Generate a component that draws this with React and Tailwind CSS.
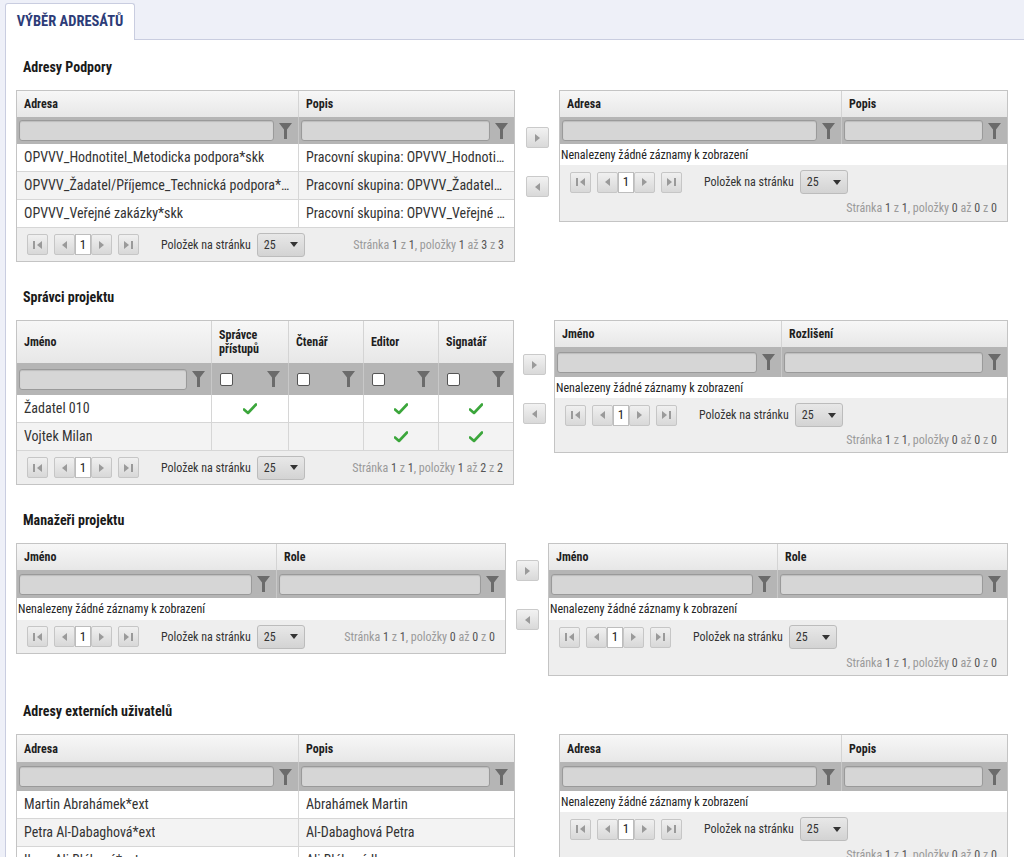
import React from "react";

const FONT = "font-['Liberation_Sans_Narrow','Roboto_Condensed',Roboto,sans-serif]";

function Funnel() {
  return (
    <svg width="13" height="16" viewBox="0 0 13 16" className="shrink-0">
      <path d="M0 0 H13 L8 6.5 V16 H5 V6.5 Z" fill="#6b6b6b" />
    </svg>
  );
}

function Check() {
  return (
    <svg width="14" height="12" viewBox="0 0 14 12">
      <path d="M1 6.5 L5 10 L13 1.5" fill="none" stroke="#3ba63b" strokeWidth="2.6" strokeLinecap="round" strokeLinejoin="round" />
    </svg>
  );
}

function Tri({ dir = "r" }) {
  return (
    <svg width="5" height="8" viewBox="0 0 5 8">
      {dir === "r" ? <path d="M0 0 L5 4 L0 8 Z" fill="#9a9a9a" /> : <path d="M5 0 L0 4 L5 8 Z" fill="#9a9a9a" />}
    </svg>
  );
}

function PgBtn({ children }) {
  return (
    <div className="w-[21px] h-[21px] flex items-center justify-center rounded-[2px] border border-[#c6c6c6] bg-gradient-to-b from-[#f0f0f0] to-[#d8d8d8]">
      {children}
    </div>
  );
}

function Pager({ total, from, to, twoLine, h = "h-[33px]", bottomH = "h-[18px]" }) {
  const left = (
    <div className="flex items-center">
      <PgBtn>
        <div className="flex items-center gap-[2px]">
          <div className="w-[1.5px] h-[8px] bg-[#9a9a9a]" />
          <Tri dir="l" />
        </div>
      </PgBtn>
      <div className="ml-[6px]">
        <PgBtn>
          <Tri dir="l" />
        </PgBtn>
      </div>
      <div className="w-[16px] h-[21px] bg-white border border-[#bdbdbd] flex items-center justify-center text-[13px] text-[#222]">
        1
      </div>
      <div>
        <PgBtn>
          <Tri dir="r" />
        </PgBtn>
      </div>
      <div className="ml-[6px]">
        <PgBtn>
          <div className="flex items-center gap-[2px]">
            <Tri dir="r" />
            <div className="w-[1.5px] h-[8px] bg-[#9a9a9a]" />
          </div>
        </PgBtn>
      </div>
      <span className="ml-[22px] text-[12px] text-[#333]">Položek na stránku</span>
      <div className="ml-[6px] w-[48px] h-[24px] rounded-[3px] border border-[#bcbcbc] bg-gradient-to-b from-[#e8e8e8] to-[#d3d3d3] flex items-center justify-between px-[6px] text-[12px] text-[#333]">
        <span>25</span>
        <svg width="8" height="5" viewBox="0 0 8 5">
          <path d="M0 0 H8 L4 5 Z" fill="#333" />
        </svg>
      </div>
    </div>
  );
  const info = (
    <span className="text-[12px] text-[#9a9a9a]">
      Stránka <span className="text-[#555]">1</span> z <span className="text-[#555]">1</span>, položky{" "}
      <span className="text-[#555]">{from}</span> až <span className="text-[#555]">{to}</span> z{" "}
      <span className="text-[#555]">{total}</span>
    </span>
  );
  if (twoLine) {
    return (
      <div className="bg-[#eeeeee] px-[10px] pb-[4px]">
        <div className="h-[34px] flex items-center">{left}</div>
        <div className={`${bottomH} flex items-center justify-end`}>{info}</div>
      </div>
    );
  }
  return (
    <div className={`bg-[#eeeeee] ${h} px-[10px] flex items-center justify-between`}>
      {left}
      {info}
    </div>
  );
}

function Table({ width, cols, rows, headerH, filterH, emptyH = "h-[21px]", twoLine, bottomH, from, to, total }) {
  return (
    <div className={`${width} shrink-0 border border-[#c4c4c4] flex flex-col`}>
      <div className={`flex ${headerH} bg-gradient-to-b from-[#f7f7f7] to-[#e7e7e7]`}>
        {cols.map((c, i) => (
          <div
            key={i}
            className={`${c.w} ${i < cols.length - 1 ? "border-r border-[#d4d4d4]" : ""} flex items-center px-[7px] text-[12px] font-bold text-[#1e1e1e] leading-[14px]`}
          >
            {c.label}
          </div>
        ))}
      </div>
      <div className={`flex ${filterH} bg-[#b5b5b5]`}>
        {cols.map((c, i) => (
          <div
            key={i}
            className={`${c.w} ${i < cols.length - 1 ? "border-r border-[#c8c8c8]" : ""} flex items-center ${c.check ? "pl-[8px] pr-[8px] justify-between" : "pl-[2px] pr-[6px] gap-[5px]"}`}
          >
            {c.check ? (
              <div className="w-[13px] h-[13px] bg-white border border-[#555] rounded-[2px]" />
            ) : (
              <div className="flex-1 h-[21px] rounded-[3px] border border-[#9a9a9a] bg-[#d6d6d6] shadow-[inset_0_1px_1px_rgba(0,0,0,0.12)]" />
            )}
            <Funnel />
          </div>
        ))}
      </div>
      {rows.length === 0 ? (
        <div className={`${emptyH} bg-white flex items-center px-[1px] text-[12px] text-[#222]`}>
          Nenalezeny žádné záznamy k zobrazení
        </div>
      ) : (
        rows.map((r, ri) => (
          <div key={ri} className={`flex h-[28px] border-b border-[#d6d6d6] ${ri % 2 === 1 ? "bg-[#f3f3f3]" : "bg-white"}`}>
            {cols.map((c, i) => (
              <div
                key={i}
                className={`${c.w} min-w-0 ${i < cols.length - 1 ? "border-r border-[#d6d6d6]" : ""} flex items-center ${r[i] === true ? "justify-center" : "px-[7px]"} text-[14px] text-[#333]`}
              >
                {r[i] === true ? <Check /> : <span className="truncate">{r[i]}</span>}
              </div>
            ))}
          </div>
        ))
      )}
      <Pager twoLine={twoLine} bottomH={bottomH} from={from} to={to} total={total} />
    </div>
  );
}

function Arrows({ pad }) {
  return (
    <div className={`flex flex-col gap-[28px] ${pad}`}>
      <div className="w-[23px] h-[21px] rounded-[2px] border border-[#cacaca] bg-gradient-to-b from-[#f2f2f2] to-[#d9d9d9] flex items-center justify-center">
        <Tri dir="r" />
      </div>
      <div className="w-[23px] h-[21px] rounded-[2px] border border-[#cacaca] bg-gradient-to-b from-[#f2f2f2] to-[#d9d9d9] flex items-center justify-center">
        <Tri dir="l" />
      </div>
    </div>
  );
}

function Section({ title, first, children }) {
  return (
    <div className={first ? "pt-[15px]" : "pt-[23px]"}>
      <div className="h-[24px] flex items-center pl-[17px] text-[14px] font-bold text-[#1a1a1a]">{title}</div>
      <div className="mt-[11px] flex items-start pl-[10px]">{children}</div>
    </div>
  );
}

export default function App() {
  const addrCols = [
    { label: "Adresa", w: "w-[282px]" },
    { label: "Popis", w: "flex-1" },
  ];
  const spravciCols = [
    { label: "Jméno", w: "w-[195px]" },
    { label: (<span>Správce<br />přístupů</span>), w: "w-[77px]", check: true },
    { label: "Čtenář", w: "w-[75px]", check: true },
    { label: "Editor", w: "w-[75px]", check: true },
    { label: "Signatář", w: "flex-1", check: true },
  ];
  return (
    <div className={`${FONT} bg-[#eef0f8] min-h-screen w-[1024px] overflow-hidden pl-[5px]`}>
      <div className="h-[39px] flex items-end">
        <div className="h-[37px] w-[130px] bg-white border border-b-0 border-[#c9cde0] rounded-t-[3px] flex items-center justify-center text-[14.5px] font-bold text-[#2d3c78] relative top-[1px]">
          VÝBĚR ADRESÁTŮ
        </div>
      </div>
      <div className="bg-white border-t border-l border-[#c9cde0] pb-[40px]">
        <Section title="Adresy Podpory" first>
          <Table
            width="w-[499px]"
            cols={addrCols}
            headerH="h-[26px]"
            filterH="h-[27px]"
            rows={[
              ["OPVVV_Hodnotitel_Metodicka podpora*skk", "Pracovní skupina: OPVVV_Hodnotitel_Metodicka podpora"],
              ["OPVVV_Žadatel/Příjemce_Technická podpora*skk", "Pracovní skupina: OPVVV_Žadatel/Příjemce_Technická podpora"],
              ["OPVVV_Veřejné zakázky*skk", "Pracovní skupina: OPVVV_Veřejné zakázky"],
            ]}
            from={1}
            to={3}
            total={3}
          />
          <div className="ml-[11px] mr-[10px]">
            <Arrows pad="pt-[37px]" />
          </div>
          <Table width="w-[449px]" cols={addrCols} headerH="h-[26px]" filterH="h-[27px]" rows={[]} twoLine from={0} to={0} total={0} />
        </Section>

        <Section title="Správci projektu">
          <Table
            width="w-[498px]"
            cols={spravciCols}
            headerH="h-[42px]"
            filterH="h-[32px]"
            rows={[
              ["Žadatel 010", true, "", true, true],
              ["Vojtek Milan", "", "", true, true],
            ]}
            from={1}
            to={2}
            total={2}
          />
          <div className="ml-[9px] mr-[8px]">
            <Arrows pad="pt-[34px]" />
          </div>
          <Table
            width="w-[454px]"
            cols={[
              { label: "Jméno", w: "w-[227px]" },
              { label: "Rozlišení", w: "flex-1" },
            ]}
            headerH="h-[26px]"
            filterH="h-[30px]"
            rows={[]}
            twoLine
            bottomH="h-[16px]"
            from={0}
            to={0}
            total={0}
          />
        </Section>

        <Section title="Manažeři projektu">
          <Table
            width="w-[490px]"
            cols={[
              { label: "Jméno", w: "w-[260px]" },
              { label: "Role", w: "flex-1" },
            ]}
            headerH="h-[26px]"
            filterH="h-[28px]"
            emptyH="h-[22px]"
            rows={[]}
            from={0}
            to={0}
            total={0}
          />
          <div className="ml-[10px] mr-[9px]">
            <Arrows pad="pt-[17px]" />
          </div>
          <Table
            width="w-[460px]"
            cols={[
              { label: "Jméno", w: "w-[229px]" },
              { label: "Role", w: "flex-1" },
            ]}
            headerH="h-[26px]"
            filterH="h-[28px]"
            emptyH="h-[22px]"
            rows={[]}
            twoLine
            bottomH="h-[17px]"
            from={0}
            to={0}
            total={0}
          />
        </Section>

        <Section title="Adresy externích uživatelů">
          <Table
            width="w-[499px]"
            cols={addrCols}
            headerH="h-[27px]"
            filterH="h-[29px]"
            rows={[
              ["Martin Abrahámek*ext", "Abrahámek Martin"],
              ["Petra Al-Dabaghová*ext", "Al-Dabaghová Petra"],
              ["Ilona Ali Bláhová*ext", "Ali Bláhová Ilona"],
              ["Jan Adámek*ext", "Adámek Jan"],
              ["Pavel Bartoš*ext", "Bartoš Pavel"],
              ["Lucie Benešová*ext", "Benešová Lucie"],
            ]}
            from={1}
            to={6}
            total={6}
          />
          <div className="ml-[11px] mr-[10px]">
            <Arrows pad="pt-[150px]" />
          </div>
          <Table width="w-[449px]" cols={addrCols} headerH="h-[27px]" filterH="h-[29px]" rows={[]} twoLine from={0} to={0} total={0} />
        </Section>
      </div>
    </div>
  );
}
